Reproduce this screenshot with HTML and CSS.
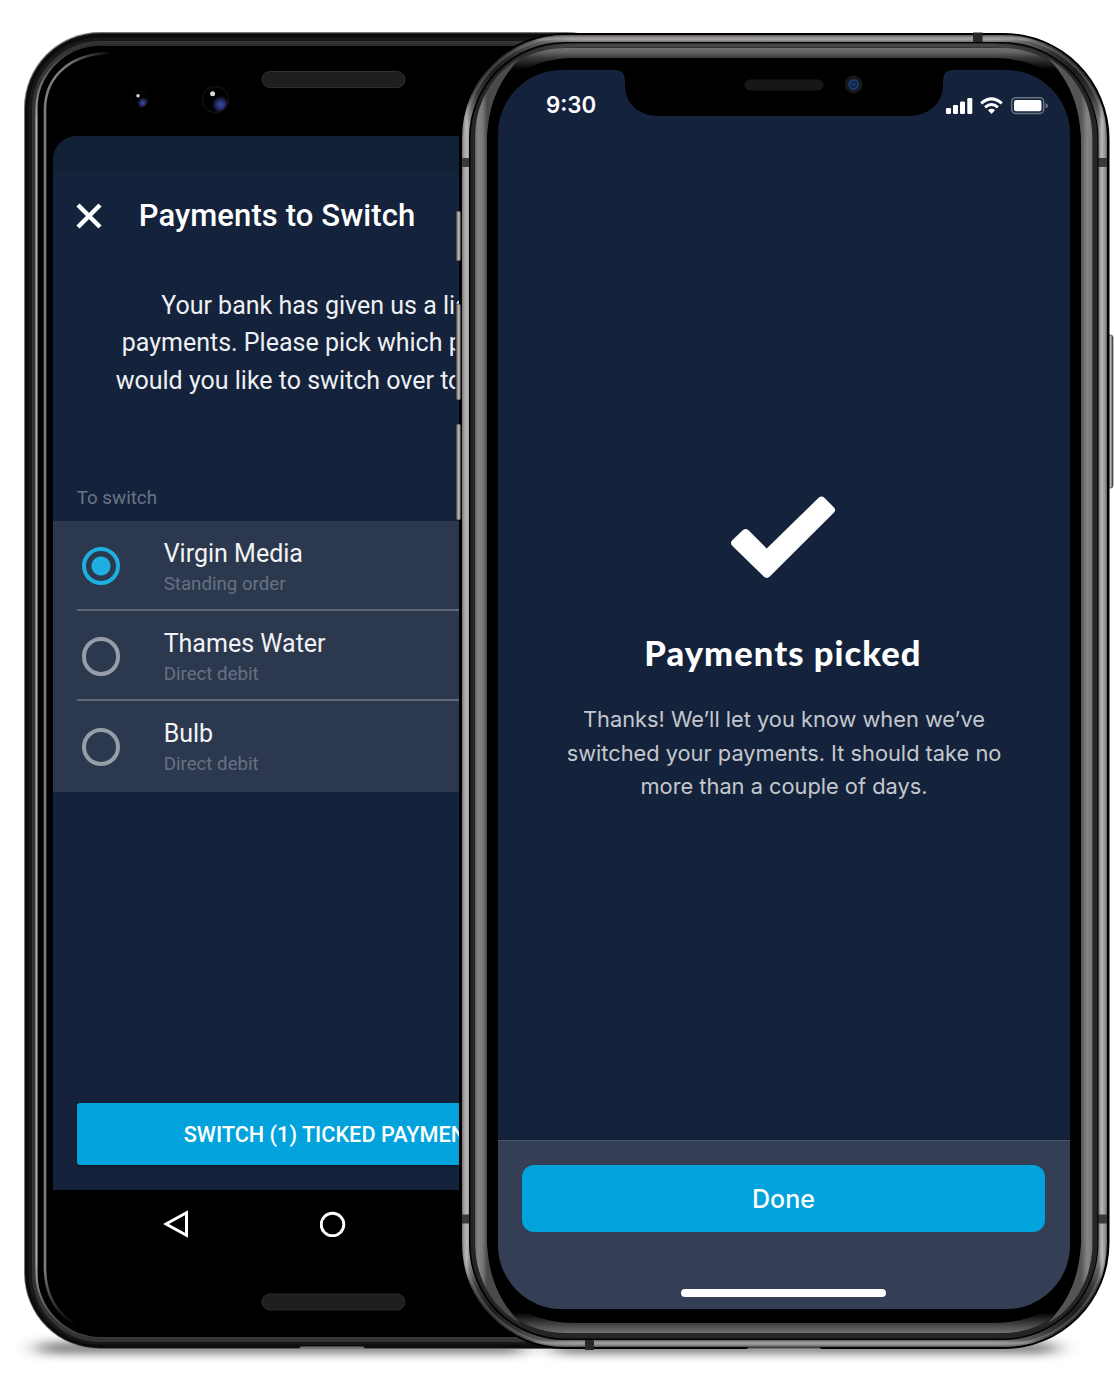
FILE: index.html
```
<!DOCTYPE html>
<html lang="en">
<head>
<meta charset="utf-8">
<title>Payments to Switch</title>
<link rel="stylesheet" href="styles.css">
</head>
<body>
<main class="stage">
  <section class="device">
    <svg class="frame" width="1114" height="1390" viewBox="0 0 1114 1390" aria-hidden="true">
      <defs>
        <filter id="soft" x="-10%" y="-200%" width="120%" height="500%"><feGaussianBlur stdDeviation="12 5"/></filter>
        <linearGradient id="sheen" x1="0" x2="0" y1="44" y2="1338" gradientUnits="userSpaceOnUse">
          <stop offset="0" stop-color="#2a2a2a"/><stop offset=".02" stop-color="#555"/><stop offset=".06" stop-color="#aaa"/><stop offset=".94" stop-color="#aaa"/><stop offset=".97" stop-color="#666"/><stop offset="1" stop-color="#3a3a3a"/>
        </linearGradient>
        <linearGradient id="arc" x1="66" x2="112" y1="0" y2="0" gradientUnits="userSpaceOnUse">
          <stop offset="0" stop-color="#7c7c7c"/><stop offset="1" stop-color="#7c7c7c" stop-opacity="0"/>
        </linearGradient>
        <linearGradient id="arc2" x1="0" x2="0" y1="1270" y2="1326" gradientUnits="userSpaceOnUse">
          <stop offset="0" stop-color="#7c7c7c"/><stop offset="1" stop-color="#7c7c7c" stop-opacity="0"/>
        </linearGradient>
        <radialGradient id="lens" cx=".7" cy=".7" r=".34"><stop offset="0" stop-color="#3a4a9c"/><stop offset=".45" stop-color="#27306e"/><stop offset="1" stop-color="#000"/></radialGradient>
      </defs>
      <rect x="38" y="1342" width="486" height="12" rx="6" fill="#000" opacity=".5" filter="url(#soft)"/>
      <rect x="552" y="1342" width="504" height="12" rx="6" fill="#000" opacity=".5" filter="url(#soft)"/>
      <rect x="24" y="32" width="618" height="1317" rx="76" fill="#777"/>
      <rect x="25" y="33.3" width="616" height="1315" rx="75" fill="#0c0c0c"/>
      <rect x="28.500" y="37.500" width="609" height="1307" rx="71" fill="#181818"/>
      <rect x="32" y="41" width="602" height="1301" rx="68" fill="#343434"/>
      <rect x="36.500" y="45" width="593" height="1292" rx="64" fill="#000" stroke="url(#sheen)" stroke-width="2.200"/>
      <rect x="38" y="46" width="590" height="1291" rx="63" fill="#000"/>
      <path d="M45 1268V110C45 75 72 53 112 53" fill="none" stroke="url(#arc)" stroke-width="2.600"/>
      <path d="M45 1268C45 1296 58 1315 78 1326" fill="none" stroke="url(#arc2)" stroke-width="2.600"/>
      <path d="M298 1349l3-2.500h62l3 2.500z" fill="#777"/>
      <g fill="#1f1f1f"><rect x="262" y="71.500" width="143" height="16" rx="8" stroke="#303030"/><rect x="262" y="1294" width="143" height="16" rx="8" stroke="#2b2b2b"/></g>
      <circle cx="139.500" cy="99.500" r="8.500" fill="url(#lens)" stroke="#0e0e0e"/>
      <circle cx="138" cy="95.700" r="1.700" fill="#d8d8d8"/>
      <circle cx="215.500" cy="99.500" r="13" fill="url(#lens)" stroke="#111" stroke-width="1.500"/>
      <circle cx="212.600" cy="93.700" r="2.500" fill="#d8d8d8"/>
    </svg>
    <div class="android">
      <div class="android-status"></div>
      <header class="android-bar">
        <svg width="26" height="26" viewBox="0 0 26 26"><path d="M2 2l22 22M24 2L2 24" stroke="#fff" stroke-width="4.500"/></svg>
        <h1>Payments to Switch</h1>
      </header>
      <div class="intro">
        <div class="l1">Your bank has given us a list</div>
        <div class="l2">payments. Please pick which pa</div>
        <div class="l3">would you like to switch over to</div>
      </div>
      <h2 class="group">To switch</h2>
      <ul class="list">
        <li><i class="radio on"></i><div class="row"><b>Virgin Media</b><span>Standing order</span></div></li>
        <li><i class="radio"></i><div class="row"><b>Thames Water</b><span>Direct debit</span></div></li>
        <li><i class="radio"></i><div class="row"><b>Bulb</b><span>Direct debit</span></div></li>
      </ul>
      <div class="switch">SWITCH (1) TICKED PAYMENTS</div>
    </div>
    <nav class="keys">
      <svg width="26" height="30" viewBox="0 0 26 30"><path d="M3 15L23.500 3.700v22.600z" fill="none" stroke="#fff" stroke-width="3"/></svg>
      <svg width="26" height="26" viewBox="0 0 26 26"><circle cx="12.500" cy="13.500" r="11.300" fill="none" stroke="#fff" stroke-width="2.900"/></svg>
    </nav>
  </section>

  <section class="device">
    <svg class="frame" width="1114" height="1390" viewBox="0 0 1114 1390" aria-hidden="true">
      <defs>
        <linearGradient id="btn" x1="0" x2="1" y1="0" y2="0"><stop offset="0" stop-color="#222"/><stop offset=".3" stop-color="#777"/><stop offset=".6" stop-color="#c4c4c4"/><stop offset="1" stop-color="#444"/></linearGradient>
        <linearGradient id="rail" x1="459" x2="1109" y1="0" y2="0" gradientUnits="userSpaceOnUse">
          <stop offset=".004" stop-color="#747172"/><stop offset=".012" stop-color="#bdbabb"/><stop offset=".016" stop-color="#989596"/><stop offset=".05" stop-color="#5a5859"/><stop offset=".95" stop-color="#5a5859"/><stop offset=".984" stop-color="#777"/><stop offset=".989" stop-color="#bbb"/><stop offset=".997" stop-color="#666"/>
        </linearGradient>
        <linearGradient id="hrail" x1="0" x2="0" y1="34" y2="1348" gradientUnits="userSpaceOnUse">
          <stop offset="0" stop-color="#4a4849"/><stop offset=".004" stop-color="#a5a1a2"/><stop offset=".0065" stop-color="#666"/><stop offset=".9935" stop-color="#555"/><stop offset=".996" stop-color="#a5a1a2"/><stop offset="1" stop-color="#444"/>
        </linearGradient>
        <linearGradient id="fade" x1="505" x2="1063" y1="0" y2="0" gradientUnits="userSpaceOnUse">
          <stop offset="0" stop-color="#fff" stop-opacity="0"/><stop offset=".12" stop-color="#fff"/><stop offset=".88" stop-color="#fff"/><stop offset="1" stop-color="#fff" stop-opacity="0"/>
        </linearGradient>
        <mask id="span" maskUnits="userSpaceOnUse" x="500" y="30" width="568" height="1325"><rect x="505" y="30" width="558" height="1325" fill="url(#fade)"/></mask>
        <linearGradient id="hbev" x1="0" x2="0" y1="48" y2="1333" gradientUnits="userSpaceOnUse">
          <stop offset="0" stop-color="#707070"/><stop offset=".003" stop-color="#666"/><stop offset=".0078" stop-color="#383838"/><stop offset=".017" stop-color="#000"/><stop offset=".984" stop-color="#000"/><stop offset=".992" stop-color="#3a3a3a"/><stop offset="1" stop-color="#717171"/>
        </linearGradient>
        <linearGradient id="lbev" x1="475" x2="487" y1="0" y2="0" gradientUnits="userSpaceOnUse"><stop offset="0" stop-color="#626262"/><stop offset=".25" stop-color="#858585"/><stop offset=".65" stop-color="#777"/><stop offset="1" stop-color="#4a4a4a"/></linearGradient>
        <linearGradient id="rbev" x1="1081" x2="1092.500" y1="0" y2="0" gradientUnits="userSpaceOnUse"><stop offset="0" stop-color="#555"/><stop offset=".55" stop-color="#858585"/><stop offset="1" stop-color="#777"/></linearGradient>
        <radialGradient id="dark"><stop offset="0" stop-color="#1c1b1b"/><stop offset=".5" stop-color="#2a2929" stop-opacity=".8"/><stop offset="1" stop-color="#444" stop-opacity="0"/></radialGradient>
        <radialGradient id="cam"><stop offset="0" stop-color="#1b4580"/><stop offset=".5" stop-color="#101f40"/><stop offset=".7" stop-color="#1f4478"/><stop offset="1" stop-color="#0f1a2c"/></radialGradient>
        <clipPath id="band"><rect x="462" y="35" width="645" height="1312" rx="103"/></clipPath>
      </defs>
      <rect x="1106" y="335" width="7" height="153" rx="2.500" fill="url(#btn)" stroke="#222" stroke-width=".6"/>
      <rect x="459" y="33" width="650.500" height="1316" rx="106" fill="#000"/>
      <g fill="url(#btn)" stroke="#222" stroke-width=".6">
        <rect x="455.500" y="211" width="5.500" height="50" rx="2"/><rect x="455.500" y="304" width="5.500" height="96" rx="2"/><rect x="455.500" y="424" width="5.500" height="96" rx="2"/>
      </g>
      <g clip-path="url(#band)">
        <rect x="462" y="35" width="645" height="1312" fill="url(#rail)"/>
        <rect x="505" y="35" width="558" height="1312" fill="url(#hrail)" mask="url(#span)"/>
        <g fill="url(#dark)"><circle cx="494" cy="72" r="58"/><circle cx="1075" cy="72" r="58"/><circle cx="494" cy="1310" r="58"/><circle cx="1075" cy="1310" r="58"/></g>
        <rect x="464.500" y="37.500" width="640" height="1307" rx="100" fill="none" stroke="#cbc6c7" stroke-opacity=".22" stroke-width="2"/>
        <g fill="#3a3939"><rect x="459" y="158" width="12" height="9"/><rect x="1097" y="158" width="12" height="9"/><rect x="459" y="1214.500" width="12" height="9"/><rect x="1097" y="1214.500" width="12" height="9"/></g>
      </g>
      <rect x="973" y="32.500" width="9.500" height="11" fill="#292828"/>
      <rect x="585" y="1339" width="9" height="11" fill="#292828"/>
      <rect x="469" y="42" width="629.500" height="1298" rx="96" fill="#000"/>
      <rect x="470.500" y="43.500" width="627" height="1295" rx="95" fill="#252525"/>
      <path d="M505 70Q530 45.500 575 45.500H993Q1038 45.500 1063 70" fill="none" stroke="#444" stroke-width="4" mask="url(#span)"/>
      <rect x="475" y="48" width="617.500" height="1285" rx="90" fill="url(#hbev)"/>
      <path d="M475 138C475 102 494 72 520 58C498 82 487 106 487 146V1235C487 1275 498 1299 520 1323C494 1309 475 1279 475 1243Z" fill="url(#lbev)"/>
      <path d="M1092.500 138C1092.500 102 1074 72 1048 58C1070 82 1081 106 1081 146V1235C1081 1275 1070 1299 1048 1323C1074 1309 1092.500 1279 1092.500 1243Z" fill="url(#rbev)"/>
      <path d="M487 146C487 95 515 58 575 58H993C1053 58 1081 95 1081 146V1235C1081 1286 1053 1323 993 1323H575C515 1323 487 1286 487 1235Z" fill="#000"/>
      <path d="M746 1349l3-1.500h70l3 1.500z" fill="#777"/>
    </svg>
    <div class="iphone">
      <div class="ios-status">
        <time>9:30</time>
        <svg class="signals" width="104" height="20" viewBox="0 0 104 20">
          <g fill="#fff"><rect x="1" y="12" width="5" height="6" rx="1.300"/><rect x="8" y="9" width="5" height="9" rx="1.300"/><rect x="15" y="5.500" width="5" height="12.500" rx="1.300"/><rect x="22.300" y="2" width="5" height="16" rx="1.300"/></g>
          <g fill="none" stroke="#fff" stroke-width="3"><path d="M36.200 7.400Q46.500-1.700 56.800 7.400"/><path d="M40.100 11.300Q46.500 5.700 52.900 11.300"/></g>
          <path d="M43 14.200q3.500-2.700 7 0L46.500 17.900z" fill="#fff"/>
          <rect x="66.700" y="1.700" width="32" height="15.800" rx="4" fill="none" stroke="#697384" stroke-width="1.500"/>
          <rect x="69" y="4" width="27.500" height="11.200" rx="2" fill="#fff"/>
          <path d="M100.500 7v5.500q2.500-.7 2.500-2.750t-2.500-2.750z" fill="#697384"/>
        </svg>
      </div>
      <svg class="notch" width="340" height="48" viewBox="0 0 340 48">
        <path d="M4-1V0H4C10 .4 13 4 13 11V15C13 33 26 46 47 46H296C317 46 331 33 331 15V11C331 4 334 .4 340 0V-1Z" fill="#000"/>
        <rect x="133" y="10" width="78" height="10" rx="5" fill="#161616" stroke="#1a1a1a"/>
        <circle cx="241.700" cy="14.500" r="9" fill="#181818"/><circle cx="241.700" cy="14.500" r="6" fill="url(#cam)"/>
      </svg>
      <div class="result">
        <svg class="tick" width="106" height="86" viewBox="0 0 106 86"><path d="M36.700 53.500L88.600 2.800Q91.500 0 94.400 2.800L104 12.400Q106.300 15 104 17.600L39.500 81.800Q36.700 84 34 81.800L2 50.500Q0 48 2 45.500L13 35Q15.700 32.800 18.300 35Z" fill="#fff"/></svg>
        <h2>Payments picked</h2>
        <p>Thanks! We’ll let you know when we’ve<br>switched your payments. It should take no<br>more than a couple of days.</p>
      </div>
      <footer>
        <div class="done">Done</div>
        <div class="home"></div>
      </footer>
    </div>
  </section>
</main>
</body>
</html>
```
FILE: styles.css
```
* { box-sizing: border-box; }
body { margin: 0; background: #fff; }
h1, h2, p, ul { margin: 0; padding: 0; }
svg { display: block; flex: none; }

.stage { position: relative; width: 1114px; height: 1390px; overflow: hidden; }
.device { position: absolute; inset: 0; }
.frame { position: absolute; inset: 0; }

.android {
  position: absolute; left: 52.700px; top: 136px; width: 561px; height: 1054px;
  display: flex; flex-direction: column;
  background: #14233b; color: #fff; border-radius: 24px 24px 0 0; overflow: hidden;
  font-family: Roboto, sans-serif;
}
.android-status { height: 36px; background: #112035; flex: none; }
.android-bar { display: flex; align-items: center; gap: 37px; height: 88px; padding-left: 23px; flex: none; }
.android-bar svg { margin-top: -1px; }
.android-bar h1 { font-size: 31px; font-weight: 500; line-height: 40px; letter-spacing: .1px; white-space: nowrap; }
.intro { margin-top: 26.500px; font-size: 25px; line-height: 37.500px; color: #eef0f3; white-space: nowrap; }
.l1 { padding-left: 108.500px; }
.l2 { padding-left: 69px; }
.l3 { padding-left: 63px; }
.group { margin: 87px 0 0 24px; height: 34.500px; font-size: 18.800px; font-weight: 400; line-height: 24px; color: #6a7486; }
.list { list-style: none; background: #2b384d; padding-left: 24px; height: 271.500px; flex: none; }
.list li { display: flex; align-items: center; gap: 43.500px; height: 90.400px; padding: 3px 0 0 5px; border-bottom: 2px solid #5f697a; }
.list li:last-child { border-bottom-color: transparent; }
.radio { width: 38.500px; height: 38.500px; border-radius: 50%; border: 4px solid #979da8; }
.radio.on { border-color: #1eaee0; background: radial-gradient(circle, #1eaee0 9px, transparent 10px); }
.row { display: flex; flex-direction: column; padding-top: 3px; }
.row b { font-size: 25px; font-weight: 400; line-height: 32px; color: #f2f3f5; }
.row span { font-size: 18.700px; line-height: 28px; color: #677183; }
.switch {
  margin: auto 24px 25px; height: 62px; flex: none; border-radius: 3px; background: #02a3dc;
  box-shadow: 0 1px 3px rgba(0,0,0,.5); padding-left: 107px;
  font-size: 21.700px; font-weight: 500; line-height: 63px; white-space: nowrap;
}
.keys { position: absolute; left: 163px; top: 1209px; display: flex; align-items: center; gap: 131px; }

.iphone {
  position: absolute; left: 498px; top: 70px; width: 572px; height: 1239px;
  display: flex; flex-direction: column;
  background: #14233b; color: #fff; border-radius: 64px; overflow: hidden;
  font-family: Inter, sans-serif;
}
.notch { position: absolute; left: 114px; top: 0; }
.ios-status { display: flex; justify-content: space-between; padding: 20px 21px 0 48px; height: 60px; flex: none; }
.ios-status time { font-size: 22.300px; font-weight: 600; line-height: 30px; }
.signals { margin-top: 5.500px; }
.result { flex: 1; display: flex; flex-direction: column; align-items: center; padding: 365px 2px 0 0; }
.result .tick { margin-right: 1px; }
.result h2 { margin-top: 47px; font-family: Lato, sans-serif; font-size: 34.500px; font-weight: 900; line-height: 50px; letter-spacing: 1.050px; }
.result p { margin: 25px 0 0 2px; font-size: 21.800px; line-height: 33.600px; color: #c4c8ce; text-align: center; white-space: nowrap; }
footer { height: 169px; flex: none; display: flex; flex-direction: column; align-items: center; background: #343f56; border-top: 1px solid #4a556b; padding: 24px 1px 0 0; }
.done { width: 523px; height: 67px; border-radius: 12px; background: #02a3dc; font-size: 25px; font-weight: 500; line-height: 68px; text-align: center; }
.home { width: 205px; height: 8px; margin-top: 57px; border-radius: 4px; background: #fff; }
```
